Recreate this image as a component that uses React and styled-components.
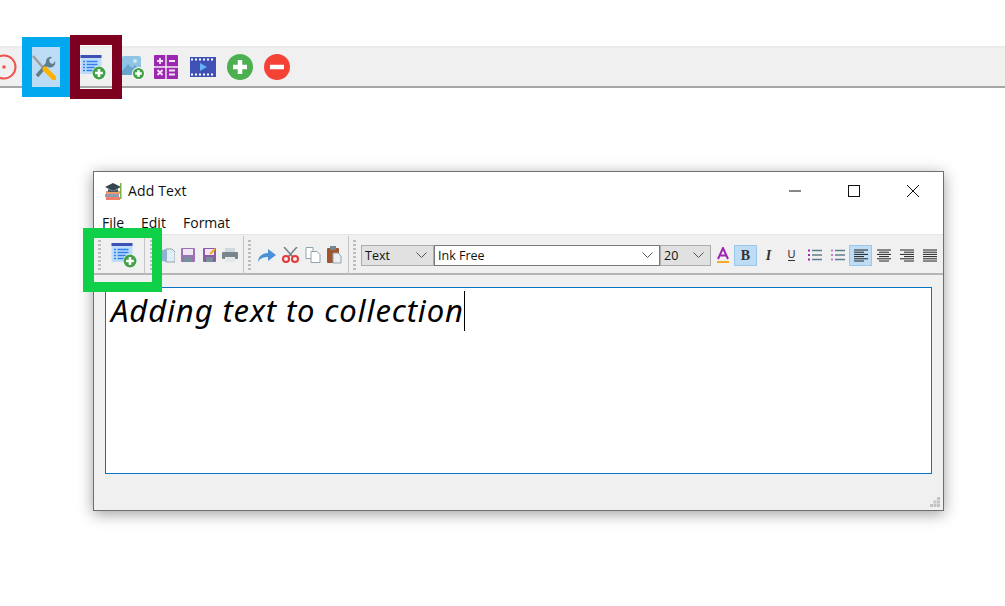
import React from 'react';
import styled, { createGlobalStyle } from 'styled-components';

const GlobalStyle = createGlobalStyle`
  html, body {
    margin: 0;
    padding: 0;
    background: #fff;
    font-family: "Open Sans", "Liberation Sans", sans-serif;
    overflow: hidden;
  }
`;

const Page = styled.div`
  width: 1005px;
  height: 606px;
  overflow: hidden;
  padding-top: 46px;
  box-sizing: border-box;
`;

const MainToolbar = styled.div`
  height: 42px;
  box-sizing: border-box;
  background: #f0f0f0;
  border-top: 2px solid #ebebeb;
  border-bottom: 2px solid #a6a6a6;
  display: flex;
  align-items: center;
`;

const ToolIcon = styled.svg`
  flex: none;
  margin-left: ${(p) => p.$left || 0}px;
`;

const Frame = styled.div`
  flex: none;
  box-sizing: border-box;
  width: ${(p) => p.$w}px;
  height: ${(p) => p.$h}px;
  margin-left: ${(p) => p.$left || 0}px;
  border: 10px solid ${(p) => p.$color};
  background: ${(p) => p.$fill || 'transparent'};
  display: flex;
  align-items: center;
  justify-content: flex-start;
`;

const Window = styled.div`
  position: relative;
  width: 851px;
  height: 340px;
  box-sizing: border-box;
  margin: 83px 0 0 93px;
  background: #f0f0f0;
  border: 1px solid #6e6e6e;
  box-shadow: 0 3px 14px rgba(0, 0, 0, 0.38);
  display: flex;
  flex-direction: column;
`;

const TitleBar = styled.div`
  height: 38px;
  flex: none;
  box-sizing: border-box;
  background: #fff;
  display: flex;
  align-items: center;
  padding: 0 1px 0 10px;
  font-size: 14px;
  color: #111;
`;

const TitleText = styled.span`
  flex: 1;
  margin: 0 0 2px 6px;
  letter-spacing: 0.15px;
`;

const WinButton = styled.div`
  width: 59px;
  height: 38px;
  display: flex;
  align-items: center;
  justify-content: center;
`;

const MenuBar = styled.div`
  height: 25px;
  flex: none;
  box-sizing: border-box;
  background: #fff;
  border-bottom: 1px solid #e6e6e6;
  display: flex;
  align-items: center;
  padding-left: 8px;
  font-size: 14px;
  color: #111;
`;

const MenuItem = styled.span`
  width: ${(p) => p.$w}px;
`;

const EditBar = styled.div`
  height: 40px;
  flex: none;
  box-sizing: border-box;
  border-bottom: 2px solid #b5b5b5;
  display: flex;
  align-items: center;
  padding: 2px 0 0 4px;
`;

const Grip = styled.div`
  width: 3px;
  height: 30px;
  flex: none;
  margin-left: ${(p) => p.$left || 0}px;
  background: repeating-linear-gradient(to bottom, #bdbdbd 0 2px, transparent 2px 4px);
`;

const Section = styled.div`
  width: ${(p) => p.$w}px;
  height: 38px;
  flex: none;
  box-sizing: border-box;
  border-right: 1px solid #c4c4c4;
  display: flex;
  align-items: center;
  padding-left: ${(p) => p.$pad}px;
  gap: ${(p) => p.$gap || 0}px;
`;

const Combo = styled.div`
  width: ${(p) => p.$w}px;
  height: 21px;
  flex: none;
  box-sizing: border-box;
  margin-left: ${(p) => p.$left || 0}px;
  background: ${(p) => (p.$white ? '#fff' : '#e1e1e1')};
  border: 1px solid ${(p) => (p.$white ? '#7a7a7a' : '#adadad')};
  display: flex;
  align-items: center;
  justify-content: space-between;
  padding: 0 6px 0 3px;
  font-size: 12.5px;
  color: #111;
`;

const FmtButton = styled.div`
  width: 23px;
  height: 21px;
  flex: none;
  box-sizing: border-box;
  display: flex;
  align-items: center;
  justify-content: center;
  background: ${(p) => (p.$on ? '#bfdcf5' : 'transparent')};
  border: 1px solid ${(p) => (p.$on ? '#9ac8ec' : 'transparent')};
  font-family: "Liberation Serif", serif;
  color: #333;
`;

const Glyph = styled.span`
  font-weight: ${(p) => (p.$bold ? 700 : 400)};
  font-style: ${(p) => (p.$italic ? 'italic' : 'normal')};
  border-bottom: ${(p) => (p.$under ? '1px solid #333' : 'none')};
  line-height: 11px;
  font-family: ${(p) => (p.$under ? '"Liberation Sans", sans-serif' : 'inherit')};
  font-size: ${(p) => (p.$under ? 11 : 14)}px;
`;

const Editor = styled.div`
  height: 187px;
  flex: none;
  box-sizing: border-box;
  margin: 12px 11px 0 11px;
  background: #fff;
  border: 1px solid #0a74c4;
  padding: 2px 0 0 5px;
  display: flex;
  align-items: flex-start;
  font-family: "Noto Sans", sans-serif;
  font-style: italic;
  font-size: 31px;
  line-height: 40px;
  letter-spacing: 0.88px;
  color: #000;
`;

const Caret = styled.span`
  width: 1px;
  height: 40px;
  margin-top: 1px;
  background: #000;
  flex: none;
`;

const Footer = styled.div`
  flex: 1;
  display: flex;
  justify-content: flex-end;
  align-items: flex-end;
  padding: 0 3px 3px 0;
`;

const GreenFrame = styled.div`
  position: absolute;
  left: -11px;
  top: 56px;
  width: 79px;
  height: 64px;
  box-sizing: border-box;
  border: solid #0fd049;
  border-width: 10px 10px 10px 11px;
`;

const Chevron = () => (
  <svg width="11" height="6" viewBox="0 0 11 6">
    <path d="M.5.5l5 5 5-5" fill="none" stroke="#555" />
  </svg>
);

const PlusBadge = ({ cx, cy, r = 6.5 }) => (
  <g>
    <circle cx={cx} cy={cy} r={r} fill="#43a047" />
    <path d={`M${cx - r * 0.6} ${cy}h${r * 1.2}M${cx} ${cy - r * 0.6}v${r * 1.2}`} stroke="#fff" strokeWidth="2.6" />
  </g>
);

const AddTextIcon = ({ size = 26 }) => (
  <svg width={size} height={size} viewBox="0 0 26 26">
    <rect x="0.5" y="1" width="21" height="19" fill="#bfdcfb" />
    <rect x="0.5" y="1" width="21" height="3" fill="#3f51b5" />
    <path d="M3 7.5h2M6.5 7.5h11M3 10.5h2M6.5 10.5h11M3 13.5h2M6.5 13.5h9M3 16.5h2M6.5 16.5h7" stroke="#2f80ed" strokeWidth="1.4" />
    <circle cx="19" cy="19" r="7" fill="#fff" />
    <PlusBadge cx={19} cy={19} />
  </svg>
);

const CloseIcon = () => (
  <svg width="12" height="12" viewBox="0 0 12 12">
    <path d="M0 0l12 12M12 0L0 12" stroke="#111" />
  </svg>
);

const TextColorIcon = () => (
  <svg width="12" height="17" viewBox="0 0 12 17">
    <path d="M1 12L6 1l5 11M3 8.5h6" fill="none" stroke="#9c27b0" strokeWidth="2" />
    <rect y="14" width="12" height="2" fill="#ffa726" />
  </svg>
);

const ListIcon = ({ marker = '#9c27b0' }) => (
  <svg width="14" height="12" viewBox="0 0 14 12">
    <path d="M0 1.5h2M0 6h2M0 10.5h2" stroke={marker} strokeWidth="2" />
    <path d="M4 1.5h10M4 6h10M4 10.5h10" stroke="#607d8b" strokeWidth="1.4" />
  </svg>
);

const AlignIcon = ({ lines }) => (
  <svg width="14" height="13" viewBox="0 0 14 13">
    {lines.map((l, i) => (
      <path key={i} d={`M${l[0]} ${1 + i * 2.2}H${l[1]}`} stroke="#222" />
    ))}
  </svg>
);

const alignLeft = [[0, 14], [0, 10], [0, 14], [0, 10], [0, 14], [0, 10]];
const alignCenter = [[0, 14], [2, 12], [0, 14], [2, 12], [0, 14], [2, 12]];
const alignRight = [[0, 14], [4, 14], [0, 14], [4, 14], [0, 14], [4, 14]];
const alignFull = [[0, 14], [0, 14], [0, 14], [0, 14], [0, 14], [0, 14]];

export default function App() {
  return (
    <Page>
      <GlobalStyle />
      <MainToolbar>
        <ToolIcon $left={-9} width="26" height="26" viewBox="0 0 26 26">
          <circle cx="13" cy="13" r="11.5" fill="none" stroke="#ef5350" strokeWidth="2" />
          <circle cx="13" cy="13" r="1.8" fill="#ef5350" />
        </ToolIcon>
        <Frame $w={48} $h={60} $left={5} $color="#00a8f0" $fill="#bcdcf5">
          <svg width="24" height="26" viewBox="0 0 24 26">
            <path d="M1 2l13 15" stroke="#9e9e9e" strokeWidth="2.5" />
            <path d="M5 22L17 8" stroke="#607d8b" strokeWidth="3.5" />
            <path d="M14 9a5 5 0 0 1 6-6l-3 3 1 3 3 1 2-3a5 5 0 0 1-7 6z" fill="#607d8b" />
            <path d="M13 15l9 9" stroke="#ffb300" strokeWidth="5" strokeLinecap="round" />
          </svg>
        </Frame>
        <Frame $w={52} $h={64} $color="#7d0020">
          <AddTextIcon size={26} />
        </Frame>
        <ToolIcon width="23" height="26" viewBox="0 0 23 26">
          <rect x="0" y="2" width="19" height="19" rx="2" fill="#90c4e4" />
          <path d="M0 17l6-7 4 4 3-3 6 6v4H0z" fill="#6aa5cc" />
          <circle cx="13" cy="7" r="2" fill="#cfe6f5" />
          <circle cx="16.5" cy="19.5" r="6.5" fill="#fff" />
          <PlusBadge cx={16.5} cy={19.5} r={5.5} />
        </ToolIcon>
        <ToolIcon $left={9} width="24" height="24" viewBox="0 0 24 24">
          <rect x="0" y="0" width="24" height="24" rx="1" fill="#9c27b0" />
          <path d="M0 12h24M12 0v24" stroke="#f0f0f0" strokeWidth="1.4" />
          <path d="M3 6h6M6 3v6M15 6h6M3.5 15l5 5M8.5 15l-5 5M15 15.5h6M15 19.5h6" stroke="#f3e5f5" strokeWidth="1.8" />
        </ToolIcon>
        <ToolIcon $left={12} width="26" height="20" viewBox="0 0 26 20">
          <rect width="26" height="20" fill="#3f51b5" />
          <path d="M1 2.5h24M1 17.5h24" stroke="#fff" strokeWidth="2" strokeDasharray="2 2" />
          <path d="M10 6l7 4-7 4z" fill="#64b5f6" />
        </ToolIcon>
        <ToolIcon $left={11} width="26" height="26" viewBox="0 0 26 26">
          <circle cx="13" cy="13" r="13" fill="#4caf50" />
          <path d="M6 13h14M13 6v14" stroke="#fff" strokeWidth="4.5" />
        </ToolIcon>
        <ToolIcon $left={11} width="26" height="26" viewBox="0 0 26 26">
          <circle cx="13" cy="13" r="13" fill="#f44336" />
          <path d="M6 13h14" stroke="#fff" strokeWidth="4.5" />
        </ToolIcon>
      </MainToolbar>

      <Window>
        <TitleBar>
          <svg width="18" height="18" viewBox="0 0 18 18">
            <rect x="2" y="9" width="14" height="3" fill="#ef9a6a" />
            <rect x="1" y="12" width="14" height="3" fill="#8d9fb0" />
            <rect x="2" y="15" width="14" height="3" fill="#ef7f6a" />
            <path d="M1 5l8-4 8 4-8 4z" fill="#37474f" />
            <path d="M4 7v3h10V7l-5 2z" fill="#455a64" />
            <rect x="16" y="1" width="1.5" height="16" fill="#7cb342" />
          </svg>
          <TitleText>Add Text</TitleText>
          <WinButton>
            <svg width="12" height="2" viewBox="0 0 12 2"><path d="M0 1h12" stroke="#111" /></svg>
          </WinButton>
          <WinButton>
            <svg width="12" height="12" viewBox="0 0 12 12"><rect x=".5" y=".5" width="11" height="11" fill="none" stroke="#111" /></svg>
          </WinButton>
          <WinButton><CloseIcon /></WinButton>
        </TitleBar>
        <MenuBar>
          <MenuItem $w={39}>File</MenuItem>
          <MenuItem $w={42}>Edit</MenuItem>
          <MenuItem $w={60}>Format</MenuItem>
        </MenuBar>
        <EditBar>
          <Grip />
          <Section $w={44} $pad={10}>
            <AddTextIcon size={26} />
          </Section>
          <Grip $left={5} />
          <Section $w={91} $pad={8} $gap={6}>
            <svg width="14" height="15" viewBox="0 0 14 15">
              <path d="M5 1h6l3 3v10H5z" fill="#e3edf5" stroke="#90a4ae" />
              <path d="M1 2l5-1v13l-5-1z" fill="#90b4ce" />
            </svg>
            <svg width="16" height="14" viewBox="0 0 16 14">
              <rect width="14" height="14" rx="1" fill="#9c72b5" />
              <rect x="2" y="1" width="10" height="6" fill="#efe6f4" />
              <rect x="3" y="9" width="8" height="5" fill="#78909c" />
            </svg>
            <svg width="13" height="14" viewBox="0 0 13 14">
              <rect width="13" height="14" rx="1" fill="#8e5aa8" />
              <rect x="2" y="1" width="9" height="6" fill="#efe6f4" />
              <rect x="3" y="9" width="7" height="5" fill="#78909c" />
              <path d="M7 6l5-5" stroke="#f9a825" strokeWidth="2" />
            </svg>
            <svg width="16" height="14" viewBox="0 0 16 14">
              <rect x="3" y="0" width="10" height="5" fill="#cfd8dc" />
              <rect y="4" width="16" height="7" rx="1" fill="#78858c" />
              <rect x="3" y="9" width="10" height="5" fill="#e5e8ea" />
            </svg>
          </Section>
          <Grip $left={4} />
          <Section $w={98} $pad={7} $gap={6}>
            <svg width="18" height="13" viewBox="0 0 18 13">
              <path d="M0 13C0 7 5 4 10 4V0l8 6-8 6V8C6 8 2 9 0 13z" fill="#4a90d9" />
            </svg>
            <svg width="17" height="16" viewBox="0 0 17 16">
              <path d="M2 0l9 10M15 0L6 10" stroke="#78858c" strokeWidth="1.6" />
              <circle cx="4" cy="12" r="3" fill="none" stroke="#e53935" strokeWidth="2" />
              <circle cx="13" cy="12" r="3" fill="none" stroke="#e53935" strokeWidth="2" />
            </svg>
            <svg width="16" height="16" viewBox="0 0 16 16">
              <path d="M1 .5h7v11H1z" fill="#fff" stroke="#90a4ae" />
              <path d="M6 4.5h6l3 3v8H6z" fill="#fff" stroke="#90a4ae" />
            </svg>
            <svg width="15" height="18" viewBox="0 0 15 18">
              <rect y="2" width="12" height="15" rx="1" fill="#a1552d" />
              <rect x="3" y="0" width="6" height="4" fill="#78858c" />
              <path d="M6 7h5l3 3v7H6z" fill="#eceff1" stroke="#90a4ae" />
            </svg>
          </Section>
          <Grip $left={4} />
          <Combo $w={73} $left={5}>Text<Chevron /></Combo>
          <Combo $w={226} $white>Ink Free<Chevron /></Combo>
          <Combo $w={51}>20<Chevron /></Combo>
          <FmtButton><TextColorIcon /></FmtButton>
          <FmtButton $on><Glyph $bold>B</Glyph></FmtButton>
          <FmtButton><Glyph $italic $bold>I</Glyph></FmtButton>
          <FmtButton><Glyph $under>U</Glyph></FmtButton>
          <FmtButton><ListIcon /></FmtButton>
          <FmtButton><ListIcon marker="#c77dd8" /></FmtButton>
          <FmtButton $on><AlignIcon lines={alignLeft} /></FmtButton>
          <FmtButton><AlignIcon lines={alignCenter} /></FmtButton>
          <FmtButton><AlignIcon lines={alignRight} /></FmtButton>
          <FmtButton><AlignIcon lines={alignFull} /></FmtButton>
        </EditBar>
        <Editor>
          Adding text to collection
          <Caret />
        </Editor>
        <Footer>
          <svg width="10" height="10" viewBox="0 0 10 10" fill="#c4c4c4">
            <rect x="7" y="0" width="3" height="3" />
            <rect x="3.5" y="3.5" width="3" height="3" />
            <rect x="7" y="3.5" width="3" height="3" />
            <rect x="0" y="7" width="3" height="3" />
            <rect x="3.5" y="7" width="3" height="3" />
            <rect x="7" y="7" width="3" height="3" />
          </svg>
        </Footer>
        <GreenFrame />
      </Window>
    </Page>
  );
}
